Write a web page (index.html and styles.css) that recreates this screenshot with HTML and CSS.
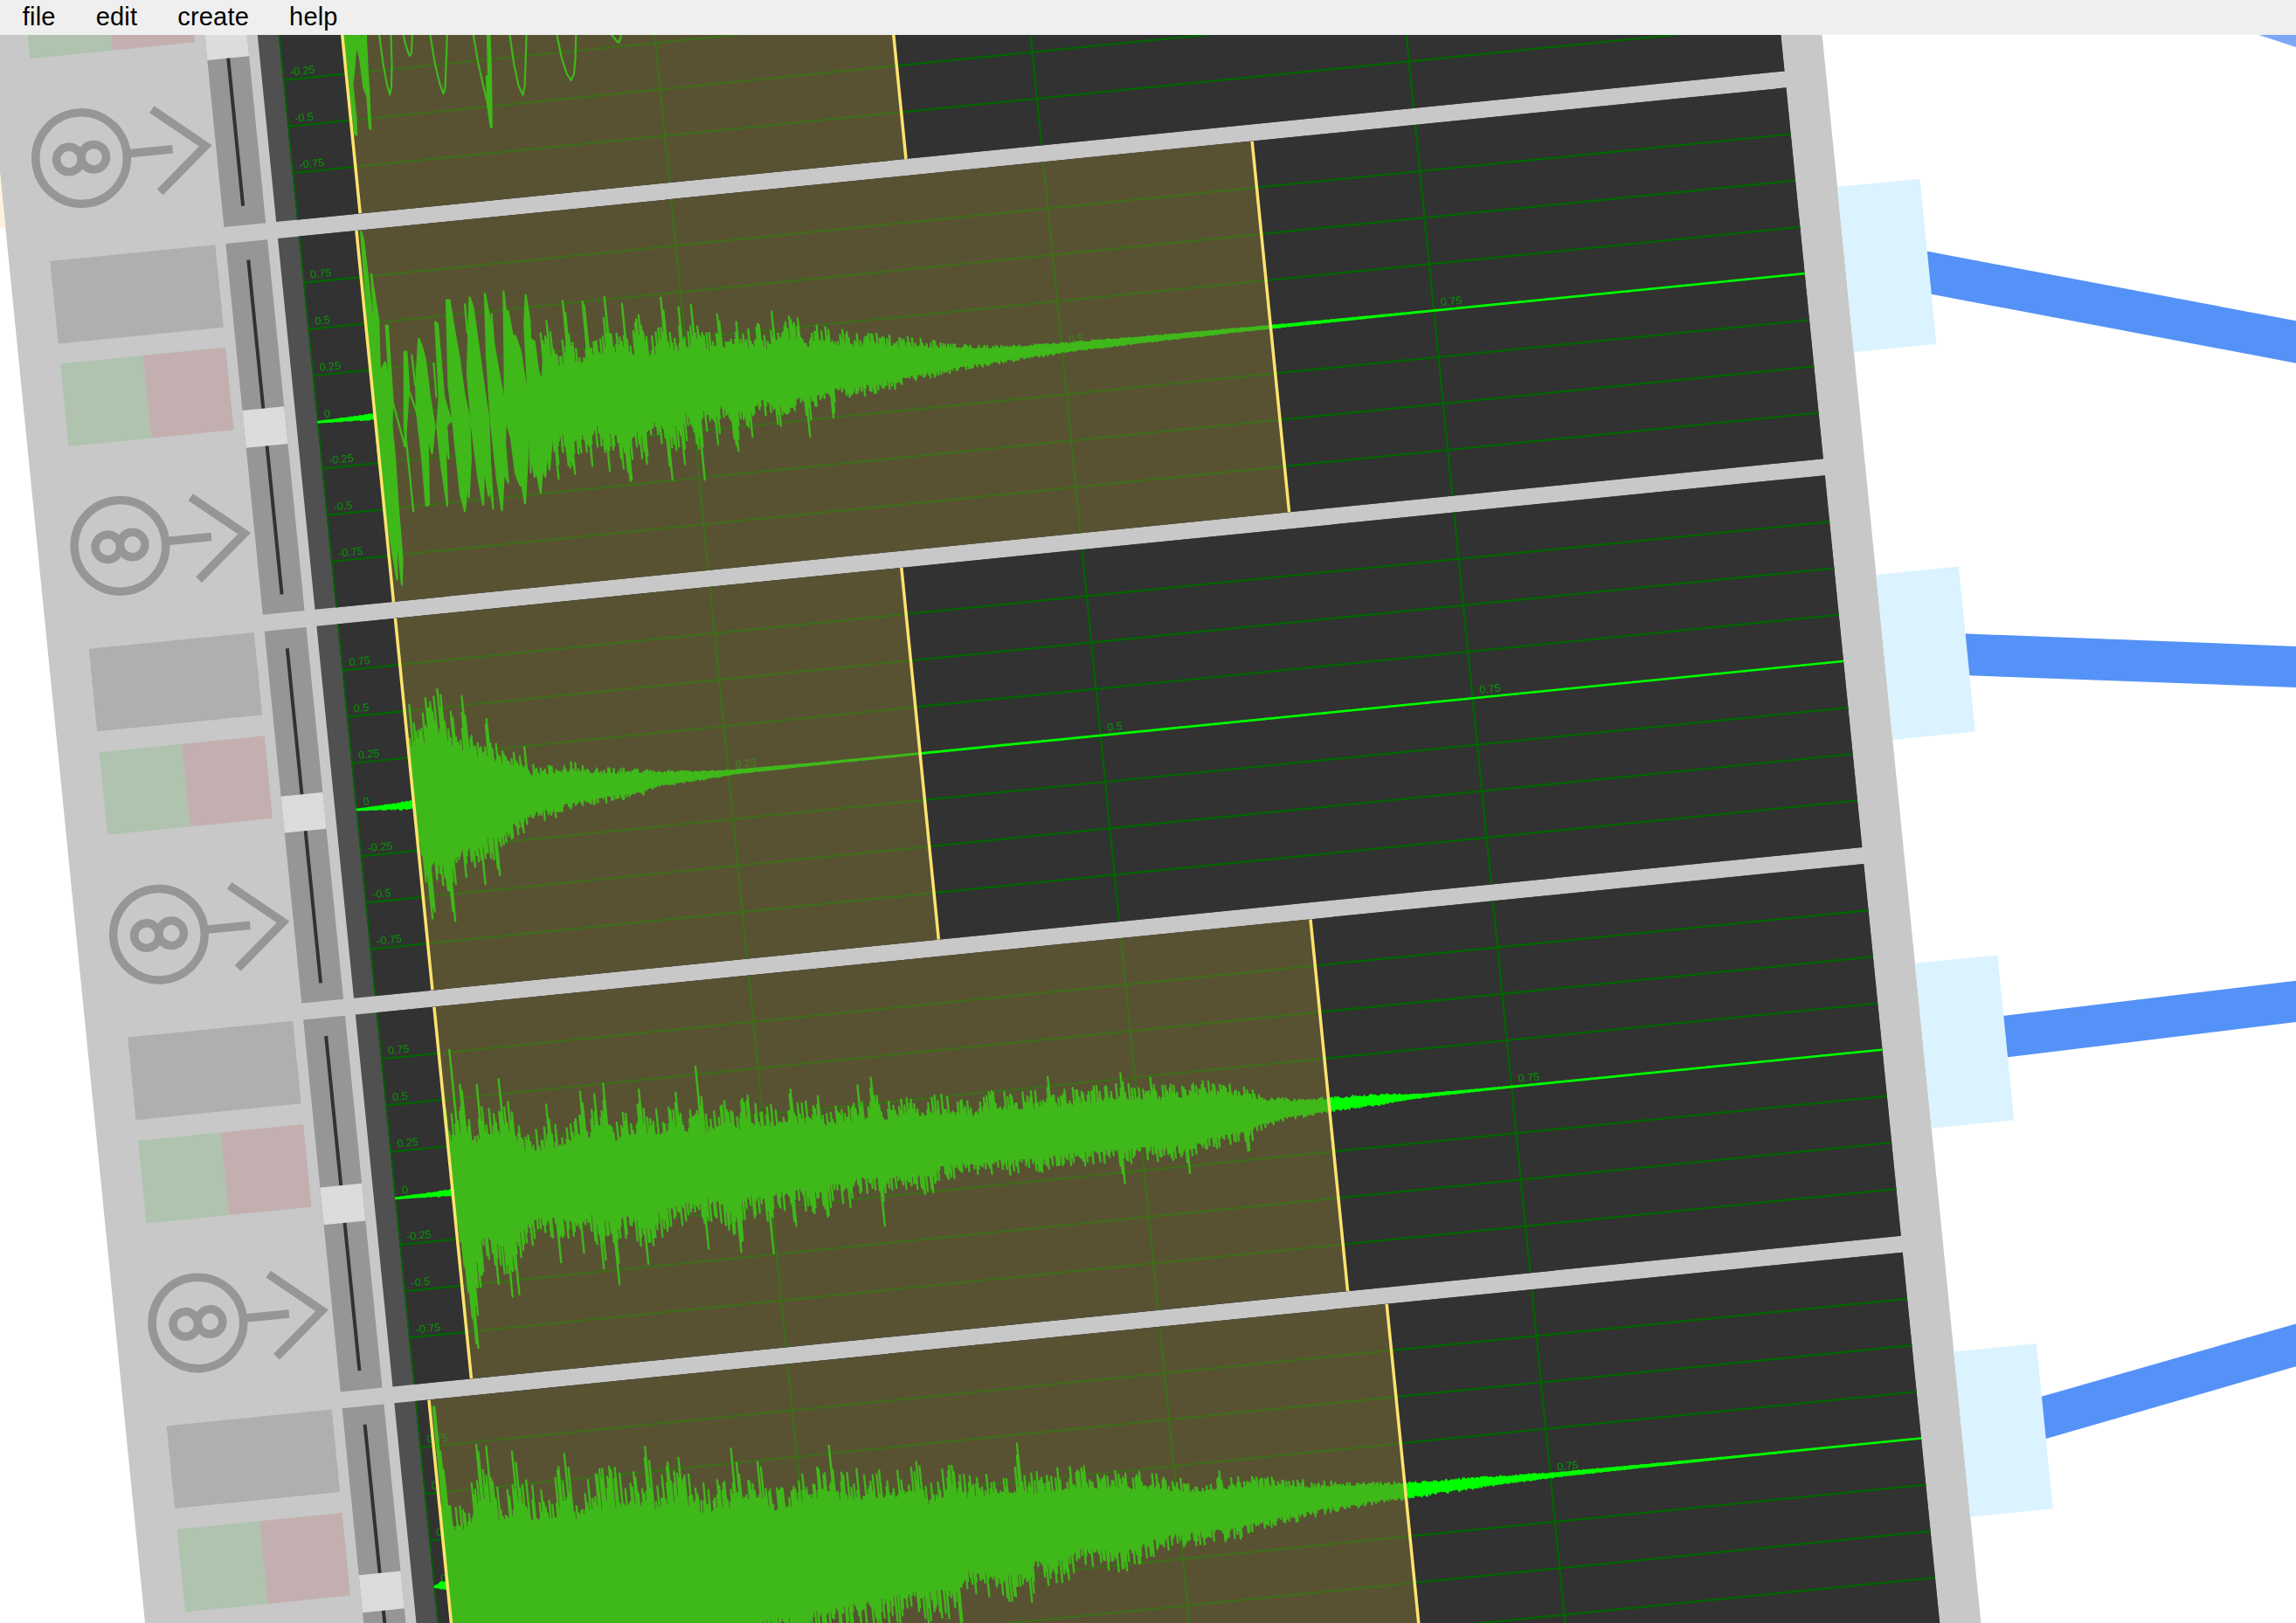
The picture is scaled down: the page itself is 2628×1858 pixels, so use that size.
FILE: index.html
```html
<!DOCTYPE html>
<html lang="en">
<head>
<meta charset="utf-8">
<title>sampler</title>
<link rel="stylesheet" href="styles.css">
</head>
<body>
<nav class="menu">
  <span class="menu-item">file</span>
  <span class="menu-item">edit</span>
  <span class="menu-item">create</span>
  <span class="menu-item">help</span>
</nav>
<main class="workspace">
  <svg class="cables" viewBox="0 40 2628 1818">
    <polygon class="cable faint" points="2585.6,40 2628,40 2628,54"/>
    <polygon class="cable" points="2196,285.8 2628,367.3 2628,415.7 2196,334"/>
    <polygon class="cable" points="2240,725.1 2628,739.9 2628,787 2240,772.8"/>
    <polygon class="cable" points="2284,1163.9 2628,1122.8 2628,1170 2284,1212"/>
    <polygon class="cable" points="2328,1601.3 2628,1515.4 2628,1564.3 2328,1651"/>
  </svg>
  <section class="sampler" id="sampler"></section>
</main>
<script src="script.js"></script>
</body>
</html>
```
FILE: styles.css
```css
* { box-sizing: border-box; }

body {
  margin: 0;
  height: 100vh;
  display: flex;
  flex-direction: column;
  overflow: hidden;
  background: #fff;
  font-family: "Liberation Sans", Arial, sans-serif;
}

.menu {
  flex: 0 0 40px;
  display: flex;
  align-items: flex-start;
  gap: 46px;
  padding: 0 25.8px;
  background: #efefef;
  color: #000;
  font-size: 29px;
  line-height: 38px;
  letter-spacing: 0.2px;
}

.workspace {
  position: relative;
  flex: 1;
  overflow: hidden;
}

.cables {
  display: block;
  width: 2628px;
  height: 1818px;
}

.cable { fill: #5592f7; }
.cable.faint { fill: #7ba7f5; }

/* The module floats on the canvas, turned about the corner of its second display. */
.sampler {
  position: absolute;
  left: 9.2px;
  top: -233.3px;
  width: 2091.1px;
  padding: 19px 47.5px 60px 47.4px;
  display: flex;
  flex-direction: column;
  gap: 19.1px;
  background: #c8c8c8;
  transform-origin: 308.8px 465.7px;
  transform: rotate(-5.71deg);
}

.track {
  position: relative;
  display: grid;
  grid-template-columns: 190px 47.5px 1734.8px;
  column-gap: 11.95px;
  height: 427.6px;
}

.controls {
  display: flex;
  flex-direction: column;
  gap: 23.75px;
}

.slot {
  height: 95px;
  background: #afafaf;
}

.buttons {
  display: flex;
  height: 95px;
}

.play { flex: 1; background: #afc3af; }
.stop { flex: 1; background: #c3afaf; }

.mode {
  width: 190px;
  height: 190px;
  overflow: visible;
  fill: none;
  stroke: #969696;
  stroke-width: 9.5;
}

.slider {
  position: relative;
  display: flex;
  justify-content: center;
  padding: 21.4px 0;
  background: #969696;
}

.groove {
  width: 4.75px;
  background: #323232;
}

.thumb {
  position: absolute;
  left: 0;
  width: 100%;
  height: 42.5px;
  background: #dcdcdc;
}

.display {
  display: flex;
  background: #505050;
  padding-left: 23.75px;
}

.scope {
  flex: 1;
  height: 427.6px;
  background: #323232;
  overflow: hidden;
}

.grid { stroke: #006400; stroke-width: 2.4; }
.label { fill: #009600; font-size: 12.5px; font-family: "Liberation Sans", Arial, sans-serif; }
.wave { fill: none; stroke: #00ff00; stroke-width: 2.3; stroke-linejoin: round; stroke-linecap: round; }
.blob { fill: #00ff00; stroke: #00ff00; stroke-width: 6; stroke-linejoin: round; }
.trace { fill: none; stroke: #00ff00; stroke-width: 6.5; stroke-linejoin: round; stroke-linecap: round; }
.region { fill: rgba(126, 114, 52, 0.5); }
.edge { stroke: #ffe36e; stroke-width: 3.5; }

.port {
  position: absolute;
  width: 95px;
}

.port.out { right: -142.5px; top: 119px; height: 190px; background: #dbf3ff; }
.port.in { left: -142.4px; top: 24px; height: 380px; background: #fff2dc; }
```
FILE: script.js
```js
const HALF = 213.8;
const LEFT = 24.2;
const QUARTER = 428;

// Peak lists hold [x, amplitude]; up is above the zero line, down below it.
const tracks = [
  {
    thumb: 193, start: 96.3, end: 724.2, input: true, labels: [5, 7],
    frame: 'matrix(.33168 .03317 -.03317 .33168 85.17 218.04)',
    blobs: ['38,-30 90,-30 92,40 80,70 76,120 70,180 82,300 84,354 78,350 66,240 56,130 40,40',
      '82,-30 90,-30 100,30 104,28 108,-30 114,-30 122,140 126,200 132,333 128,330 120,220 108,190 98,110 86,45',
      '532,-30 539,-30 545,120 548,328 544,325 534,255 530,152 536,150'],
    traces: ['158,-30 162,12 175,110 188,180 198,215 203,190 205,110 200,-30',
      '236,-30 250,35 262,75 267,82 272,70 277,-30',
      '330,-30 337,12 352,105 370,180 382,212 388,190 391,110 396,-30',
      '480,-30 485,12 500,100 520,190 538,265',
      '604,-30 610,12 624,110 640,185 655,216 661,185 664,110 668,-30',
      '764,-30 772,12 788,90 806,145 820,166 830,145 835,90 838,-30',
      '958,8 968,20 978,32 985,36 990,20 993,0']
  },
  {
    thumb: 192.8, start: 90.1, end: 1120.4, seed: 7,
    frame: 'matrix(.3554 .03554 -.03317 .33168 25.07 -29.65)',
    blobs: ['204,72 212,100 262,560 282,520 305,655 303,740 313,850 322,1000 337,1200 335,1285 316,1080 320,1268 298,1130 262,870 246,660 230,440',
      '237,218 260,375 265,560 258,540', '284,395 290,395 306,655 296,600',
      '343,485 350,485 358,610 347,780 343,740',
      '389,440 400,470 410,510 425,640 440,740 432,835 418,770 422,1010 413,1015 400,850 383,690 380,600',
      '442,383 450,390 470,640 492,722 478,740 486,853 474,790 481,1015 462,880 448,740 455,640',
      '478,308 488,308 500,390 518,500 535,630 552,715 556,850 550,985 546,930 537,1033 523,975 500,740 485,600',
      '552,298 563,330 585,500 603,640 613,710 618,860 628,1025 620,960 613,980 598,870 596,1012 580,920 560,750 545,560',
      '601,285 613,350 635,490 660,640 668,710 666,800 676,935 662,900 656,1030 640,920 620,720 607,500',
      '661,278 668,345 675,345 690,430 698,430 715,480 732,600 740,640 738,850 730,1007 718,930 715,945 700,905 685,780 665,710 664,490',
      '728,392 732,290 745,380 747,440 760,450 772,550 785,590 790,480 796,560 810,520 815,800 808,890 800,820 795,915 786,880 780,970 768,900 760,915 750,820 748,900 740,640'],
    traces: ['305,655 345,810', '345,750 356,860 372,1033', '355,610 385,700', '345,810 348,700',
      '367,497 378,600', '437,525 446,640', '537,322 545,420', '622,355 630,460', '382,542 388,640',
      '410,640 440,745', '465,640 495,725'],
    from: 288,
    up: [[LEFT, .002], [60, .009], [90, .014], [91, 0], [287, 0], [288, .4], [295.7, .417], [305, .25], [314, .3], [317.6, .516], [323, .28], [335, .27], [339.9, .502], [345, .3], [360, .33], [364.6, .514], [371, .32], [380, .35], [384, .469], [389, .27], [402.4, .4], [411, .25], [424, .33], [429.2, .48], [435, .29], [444, .3], [448.4, .42], [455, .28], [462.8, .425], [473, .29], [487, .24], [491.2, .361], [498, .22], [511.7, .312], [520, .25], [536.3, .289], [547, .22], [553.8, .348], [558, .24], [565.2, .294], [583, .296], [592, .22], [603, .25], [640, .19], [673, .168], [740, .1], [760, .07], [800, .045], [872, .026], [990, .015], [1120, .007], [1300, .002], [1735, .001]],
    down: [[LEFT, .002], [60, .009], [90, .016], [91, 0], [287, 0], [291, .43], [300, .3], [311.4, .414], [322, .26], [331.8, .38], [341, .27], [350.8, .416], [358, .31], [374.7, .474], [380, .28], [394.3, .397], [404, .25], [416, .32], [420.9, .495], [425, .28], [436.8, .42], [444, .22], [453, .35], [457.5, .513], [461, .2], [476.4, .331], [485, .2], [499.2, .377], [504, .24], [517.4, .31], [526, .15], [550.7, .267], [566, .2], [579, .2], [583, .34], [588, .17], [608, .18], [612, .25], [617, .14], [650, .15], [700, .11], [760, .065], [837, .04], [900, .025], [990, .014], [1120, .007], [1300, .002], [1735, .001]]
  },
  {
    thumb: 189.3, start: 90.2, end: 672.5, seed: 21, from: 91,
    up: [[LEFT, .002], [60, .01], [90, .02], [92, .3], [96.4, .53], [106, .45], [116, .57], [129.2, .6], [140, .46], [153, .42], [157.4, .55], [161, .35], [178, .3], [182.3, .415], [187, .29], [218, .2], [222.2, .245], [226, .14], [250, .133], [278, .133], [300, .1], [344.4, .067], [400, .033], [451.8, .012], [560, .004], [700, .002], [1735, .001]],
    down: [[LEFT, .002], [60, .015], [90, .028], [92, .35], [97.3, .62], [108, .5], [123.6, .645], [132, .46], [157, .38], [161.7, .464], [166, .35], [175, .33], [178.6, .424], [183, .29], [197, .26], [231.4, .16], [269.6, .117], [316, .09], [352, .07], [365, .04], [433, .02], [460, .01], [560, .004], [700, .002], [1735, .001]]
  },
  {
    thumb: 193, start: 90.2, end: 1098.3, seed: 35, from: 91,
    up: [[LEFT, .002], [60, .009], [90, .016], [92, .45], [100, .42], [102.3, .762], [105, .5], [110.8, .573], [114, .46], [126, .4], [130, .56], [134, .45], [151, .45], [155.7, .58], [162, .46], [180, .28], [201, .28], [206.2, .42], [211, .3], [241, .33], [246.3, .47], [251, .35], [273.8, .5], [280, .3], [310, .35], [314, .45], [318, .32], [350, .32], [355, .415], [360, .31], [378, .36], [381.6, .543], [385, .3], [409.6, .343], [422, .28], [436.7, .36], [445, .3], [483, .29], [487, .37], [492, .28], [517.6, .32], [523, .25], [559, .26], [563.7, .357], [567, .25], [575, .25], [578.8, .39], [583, .28], [592, .24], [611, .257], [659, .25], [690, .21], [715, .2535], [750, .22], [776, .22], [780.4, .3], [784, .21], [860, .23], [864, .28], [870, .21], [895, .2], [898.6, .24], [903, .18], [963.8, .19], [1003, .137], [1025, .085], [1050.5, .055], [1099, .038], [1148, .033], [1200, .009], [1260, .004], [1330, .002], [1735, .001]],
    down: [[LEFT, .002], [60, .009], [90, .015], [92, .3], [97, .6], [100.2, .84], [106, .72], [112, .44], [127, .4], [131, .51], [135, .38], [145, .586], [153.7, .56], [160, .4], [180, .3], [201, .28], [205.6, .43], [210, .29], [232.4, .39], [244, .28], [253.7, .485], [260, .33], [266, .4], [268.8, .578], [272, .57], [276, .33], [296, .38], [304.8, .485], [320, .34], [352, .27], [371, .26], [375, .437], [379, .27], [400, .33], [410.8, .47], [420, .27], [444, .3], [448.6, .495], [453, .28], [473, .25], [477, .36], [481, .26], [515.5, .32], [522, .23], [541, .29], [550, .22], [575, .23], [578.4, .407], [582, .22], [637.3, .254], [645, .19], [690, .18], [760, .2], [820, .18], [853, .2], [856.5, .308], [860, .2], [928, .2], [932, .288], [936, .19], [996, .15], [1000.5, .2], [1010, .11], [1039, .06], [1099, .036], [1160, .025], [1200, .009], [1260, .004], [1330, .002], [1735, .001]]
  },
  {
    thumb: 192.6, start: 39.5, end: 1141.3, seed: 52, from: 40, labels: [1, 4],
    up: [[LEFT, .002], [32, .02], [39, .03], [43, .96], [44.4, .96], [46.5, .82], [48.3, .69], [50, .5], [58, .45], [75, .52], [88.4, .734], [94, .6], [99.7, .72], [105, .52], [123, .54], [127.7, .68], [137, .64], [143, .48], [175, .5], [180, .635], [188, .64], [194, .46], [238.8, .53], [276, .48], [280.8, .634], [285, .46], [317, .557], [330, .4], [373, .42], [377.6, .58], [388, .46], [406, .494], [416, .36], [480, .43], [490, .543], [496, .4], [560, .36], [572.8, .403], [588, .41], [598, .27], [624, .37], [640, .31], [701, .31], [704.4, .453], [708, .28], [775.3, .287], [847.8, .22], [895, .16], [926, .15], [930.9, .197], [936, .15], [968, .15], [1029.8, .097], [1101, .055], [1144, .038], [1234, .025], [1305, .012], [1408, .006], [1500, .003], [1735, .001]],
    down: [[LEFT, .002], [32, .015], [39, .02], [42, .9], [200, .85], [300, .7], [338, .6], [450, .55], [560, .46], [610, .47], [620, .5], [632, .33], [680, .39], [703, .4], [710, .3], [748, .3], [760, .22], [815, .283], [829.5, .237], [868, .18], [936.3, .176], [987.4, .13], [1035, .09], [1110, .055], [1144.7, .048], [1234, .026], [1305, .012], [1408, .006], [1500, .003], [1735, .001]]
  }
];

function randomFrom(seed) {
  let s = seed;
  return () => {
    s = (s + 0x6D2B79F5) | 0;
    let t = Math.imul(s ^ (s >>> 15), 1 | s);
    t = (t + Math.imul(t ^ (t >>> 7), 61 | t)) ^ t;
    return ((t ^ (t >>> 14)) >>> 0) / 4294967296;
  };
}

function level(points, x) {
  for (let i = 1; i < points.length; i++) {
    if (x <= points[i][0]) {
      const [x0, a0] = points[i - 1];
      const [x1, a1] = points[i];
      return a0 + (a1 - a0) * Math.max(0, (x - x0) / (x1 - x0));
    }
  }
  return points[points.length - 1][1];
}

function wavePath(track) {
  const rnd = randomFrom(track.seed);
  const step = 1.6;
  const near = (pts, x) => pts.find((p, i) => Math.abs(p[0] - x) <= step / 2 &&
    p[1] >= (pts[i - 1] || p)[1] && p[1] >= (pts[i + 1] || p)[1]);
  const value = (pts, x) => {
    const peak = near(pts, x);
    if (peak) return peak[1];
    const a = level(pts, x);
    const floor = a > 0.08 ? 0.6 : 0.65;
    return a * (floor + (1.06 - floor) * Math.pow(rnd(), 1.7));
  };
  let d = '';
  let pen = 'M';
  for (let x = LEFT; x < 1736; x += step) {
    if (x > track.start && x < track.from) { pen = 'M'; continue; }
    const top = HALF - value(track.up, x) * HALF;
    const bottom = HALF + value(track.down, x) * HALF;
    d += `${pen}${x.toFixed(1)} ${top.toFixed(1)}L${(x + step / 2).toFixed(1)} ${bottom.toFixed(1)}`;
    pen = 'L';
  }
  return d;
}

function scope(track) {
  const [first, last] = track.labels || [1, 7];
  let s = '<svg class="scope" viewBox="23.75 0 1711.05 427.6" preserveAspectRatio="none">';
  for (let i = 1; i < 8; i++) {
    const y = i * HALF / 4;
    s += `<line class="grid" x1="24" x2="1736" y1="${y}" y2="${y}"/>`;
    if (i >= first && i <= last) s += `<text class="label" x="32.6" y="${y - 4.4}">${1 - i / 4}</text>`;
  }
  for (let i = 0; i < 4; i++) {
    const x = LEFT + i * QUARTER;
    s += `<line class="grid" x1="${x}" x2="${x}" y1="0" y2="428"/>`;
    if (i && first === 1) s += `<text class="label" x="${x + 8.6}" y="209.4">${i / 4}</text>`;
  }
  if (track.up) s += `<path class="wave" d="${wavePath(track)}"/>`;
  if (track.blobs) {
    s += `<g transform="${track.frame}">`;
    s += track.blobs.map(p => `<polygon class="blob" points="${p}"/>`).join('');
    s += track.traces.map(p => `<polyline class="trace" points="${p}"/>`).join('');
    s += '</g>';
  }
  s += `<rect class="region" x="${track.start}" y="0" width="${track.end - track.start}" height="428"/>`;
  for (const x of [track.start, track.end]) {
    s += `<line class="edge" x1="${x}" x2="${x}" y1="0" y2="428"/>`;
  }
  return s + '</svg>';
}

document.getElementById('sampler').innerHTML = tracks.map(t => `
  <div class="track">
    <div class="controls">
      <div class="slot"></div>
      <div class="buttons"><div class="play"></div><div class="stop"></div></div>
      <svg class="mode" viewBox="0 0 190 190">
        <circle cx="47.3" cy="95.2" r="52.25"/>
        <circle cx="33.1" cy="95.2" r="14.25"/>
        <circle cx="61.6" cy="95.2" r="14.25"/>
        <path d="M99 95.2H152.3M133.2 47.7L190.2 95.2L133.2 142.7"/>
      </svg>
    </div>
    <div class="slider"><div class="groove"></div><div class="thumb" style="top:${t.thumb}px"></div></div>
    <div class="display">${scope(t)}</div>
    <div class="port out"></div>
    ${t.input ? '<div class="port in"></div>' : ''}
  </div>`).join('');
```
